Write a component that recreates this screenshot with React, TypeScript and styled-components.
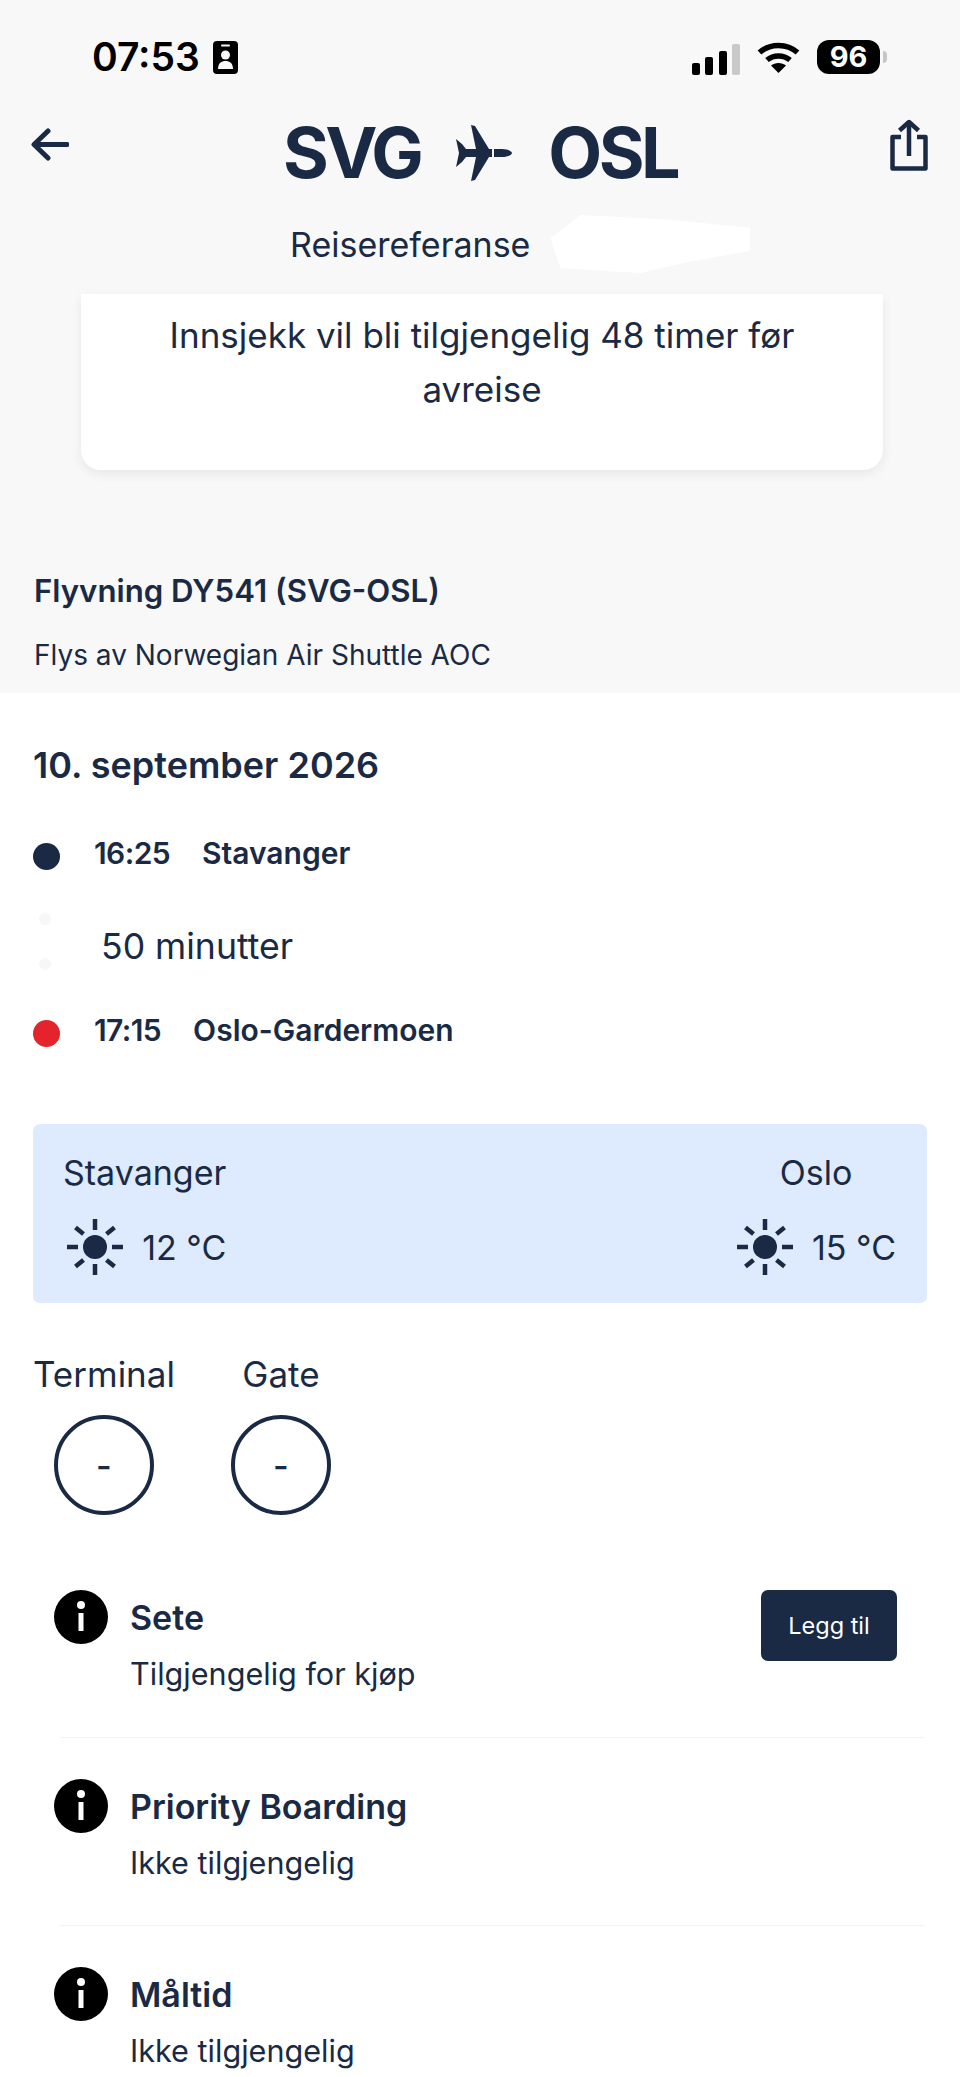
import React from 'react';
import styled, { createGlobalStyle } from 'styled-components';

const navy = '#1a2a44';

const GlobalStyle = createGlobalStyle`
  html, body {
    margin: 0;
    padding: 0;
    background: #fff;
  }
  body {
    font-family: Inter, "Noto Sans", sans-serif;
    color: ${navy};
  }
`;

const Page = styled.div`
  width: 960px;
  height: 2077px;
  overflow: hidden;
  background: #fff;
`;

const TopSection = styled.section`
  background: #f8f8f9;
  height: 693px;
  overflow: hidden;
`;

const StatusBar = styled.div`
  height: 40px;
  padding: 37px 80px 30px 92px;
  display: flex;
  align-items: center;
  justify-content: space-between;
  color: #000;
`;

const StatusLeft = styled.div`
  display: flex;
  align-items: center;
  gap: 13px;
`;

const StatusTime = styled.span`
  font-size: 39px;
  font-weight: 600;
  line-height: 40px;
`;

const StatusRight = styled.div`
  display: flex;
  align-items: center;
`;

const Battery = styled.div`
  width: 63px;
  height: 34px;
  margin-left: 17px;
  background: #000;
  border-radius: 12px;
  color: #fff;
  font-size: 29px;
  font-weight: 700;
  line-height: 34px;
  text-align: center;
  position: relative;

  &::after {
    content: '';
    position: absolute;
    right: -7px;
    top: 11px;
    width: 4px;
    height: 12px;
    border-radius: 0 6px 6px 0;
    background: #c6c6c6;
  }
`;

const HeaderRow = styled.header`
  display: grid;
  grid-template-columns: 100px 1fr 100px;
  align-items: start;
  height: 100px;
  padding: 2px 0 0;
`;

const BackButton = styled.div`
  padding: 19px 0 0 31px;
`;

const ShareButton = styled.div`
  display: flex;
  justify-content: flex-end;
  padding: 10px 32px 0 0;
`;

const Route = styled.div`
  display: flex;
  justify-content: center;
  align-items: center;
  gap: 36px;
  height: 76px;
  padding-top: 6px;
`;

const Airport = styled.span`
  font-size: 70px;
  font-weight: 700;
  letter-spacing: -3.5px;
  line-height: 76px;
`;

const ReferenceRow = styled.div`
  display: flex;
  align-items: center;
  gap: 20px;
  height: 70px;
  padding-left: 290px;
`;

const ReferenceLabel = styled.span`
  font-size: 34px;
  font-weight: 400;
`;

const Redaction = styled.span`
  display: block;
  width: 200px;
  height: 58px;
  background: #fff;
  clip-path: polygon(15% 0, 60% 8%, 100% 22%, 100% 62%, 70% 80%, 45% 100%, 5% 92%, 0 40%);
`;

const NoticeCard = styled.div`
  margin: 15px 77px 0 81px;
  height: 176px;
  padding-top: 14px;
  box-sizing: border-box;
  background: #fff;
  border-radius: 0 0 20px 20px;
  box-shadow: 0 4px 12px rgba(0, 0, 0, 0.07);
  font-size: 35px;
  line-height: 54px;
  text-align: center;
`;

const FlightInfo = styled.div`
  padding: 99px 34px 0;
`;

const FlightTitle = styled.h2`
  margin: 0;
  font-size: 31.2px;
  font-weight: 600;
  line-height: 44px;
`;

const FlightOperator = styled.p`
  margin: 22px 0 0;
  font-size: 28px;
  line-height: 40px;
`;

const Main = styled.main`
  padding: 48px 33px 0 33px;
`;

const DateTitle = styled.h1`
  margin: 0;
  font-size: 36px;
  font-weight: 600;
  line-height: 48px;
`;

const StopRow = styled.div`
  display: flex;
  align-items: center;
  height: 44px;
  font-size: 30px;
  font-weight: 600;
`;

const StopTime = styled.span`
  margin-right: 32px;
  letter-spacing: -0.6px;
`;

const StopDot = styled.i<{ $color: string }>`
  width: 27px;
  height: 27px;
  margin: 6px 34px 0 0;
  border-radius: 50%;
  background: ${(p) => p.$color};
`;

const Itinerary = styled.div`
  margin-top: 42px;
`;

const DurationRow = styled.div`
  display: flex;
  align-items: center;
  height: 90px;
  padding-left: 6px;
  gap: 50px;
  margin: 26px 0 17px;
`;

const FadedDots = styled.div`
  display: flex;
  flex-direction: column;
  gap: 33px;
  margin-top: -10px;
`;

const FadedDot = styled.i`
  display: block;
  width: 12px;
  height: 12px;
  border-radius: 50%;
  background: #f7f7f8;
`;

const DurationText = styled.span`
  font-size: 35.6px;
`;

const WeatherBox = styled.div`
  display: flex;
  justify-content: space-between;
  margin-top: 72px;
  height: 179px;
  padding: 27px 31px 0 30px;
  box-sizing: border-box;
  background: #deeafe;
  border-radius: 7px;
`;

const WeatherColumn = styled.div`
  display: flex;
  flex-direction: column;
  align-items: center;
`;

const WeatherCity = styled.span<{ $left?: boolean }>`
  font-size: 34px;
  line-height: 44px;
  align-self: ${(p) => (p.$left ? 'flex-start' : 'center')};
`;

const WeatherTemp = styled.div`
  display: flex;
  align-items: center;
  align-self: flex-end;
  gap: 18px;
  margin-top: 23px;
  font-size: 34px;
`;

const GateRow = styled.div`
  display: flex;
  gap: 56px;
  margin-top: 49px;
`;

const GateColumn = styled.div`
  display: flex;
  flex-direction: column;
  align-items: center;
`;

const GateLabel = styled.span`
  font-size: 35px;
  line-height: 44px;
`;

const GateCircle = styled.div`
  width: 100px;
  height: 100px;
  margin-top: 19px;
  box-sizing: border-box;
  border: 4px solid ${navy};
  border-radius: 50%;
  display: flex;
  align-items: center;
  justify-content: center;
  font-size: 34px;
  font-weight: 500;
`;

const Services = styled.div`
  margin-top: 75px;
`;

const ServiceRow = styled.div<{ $divider?: boolean }>`
  display: flex;
  align-items: flex-start;
  height: ${(p) => (p.$divider ? 188.6 : 113)}px;
  padding-left: 21px;
  padding-right: 30px;
  gap: 22px;
  position: relative;

  ${(p) =>
    p.$divider &&
    `&::after {
      content: '';
      position: absolute;
      left: 27px;
      right: 2px;
      bottom: 41px;
      height: 1px;
      background: #f4f4f5;
    }`}
`;

const ServiceText = styled.div`
  flex: 1;
`;

const ServiceTitle = styled.div`
  font-size: 34px;
  font-weight: 600;
  line-height: 56px;
`;

const ServiceStatus = styled.div`
  margin-top: 8px;
  font-size: 30.6px;
  line-height: 40px;
`;

const AddButton = styled.button`
  width: 136px;
  height: 71px;
  border: none;
  border-radius: 7px;
  background: ${navy};
  color: #fff;
  font-family: inherit;
  font-size: 23.5px;
`;

const SignalBar = styled.i<{ $height: number; $off?: boolean }>`
  display: block;
  width: 8px;
  height: ${(p) => p.$height}px;
  border-radius: 2px;
  background: ${(p) => (p.$off ? '#c9c9c9' : '#000')};
`;

const Signal = styled.div`
  display: flex;
  align-items: flex-end;
  gap: 5.5px;
  height: 32px;
  margin: 4px 17px 0 0;
`;

const BadgeIcon = () => (
  <svg width="25" height="33" viewBox="0 0 25 33">
    <rect width="25" height="33" rx="4" fill="#000" />
    <rect x="8" y="3.5" width="9" height="2" rx="1" fill="#f8f8f9" />
    <circle cx="12.5" cy="14" r="4.5" fill="#f8f8f9" />
    <path d="M5 28c0-6 3.5-8 7.5-8s7.5 2 7.5 8z" fill="#f8f8f9" />
  </svg>
);

const WifiIcon = () => (
  <svg width="43" height="32" viewBox="0 0 43 32" fill="none" stroke="#000" strokeWidth="5.5">
    <path d="M2.5 11.5C13 2 30 2 40.5 11.5" />
    <path d="M10 19c6.500-5.500 16.500-5.500 23 0" />
    <path d="M21.500 32 14 24.500c4-3.500 11-3.500 15 0z" fill="#000" stroke="none" />
  </svg>
);

const BackIcon = () => (
  <svg width="38" height="33" viewBox="0 0 38 33" fill="none" stroke={navy} strokeWidth="5" strokeLinecap="round" strokeLinejoin="round">
    <path d="M36 16.500H4" />
    <path d="M17 3 3 16.500 17 30" />
  </svg>
);

const ShareIcon = () => (
  <svg width="38" height="52" viewBox="0 0 38 52" fill="none" stroke={navy} strokeWidth="4.500" strokeLinejoin="round">
    <path d="M11 18H2.500v31.500h33V18H27" />
    <path d="M19 37V4" />
    <path d="M9.500 11.500 19 3l9.500 8.500" strokeWidth="4.500" />
  </svg>
);

const PlaneIcon = () => (
  <svg width="56" height="56" viewBox="0 0 56 56" fill={navy}>
    <path d="M0 14 6 19 10 24H20L15 0 19 1 33 24H36V32H33L19 55 15 56 20 32H10L6 37 0 42 3 28Z" />
    <path d="M38 24H46C51 24 56 26 56 28C56 30 51 32 46 32H38Z" />
  </svg>
);

const SunIcon = () => (
  <svg width="58" height="58" viewBox="0 0 58 58" fill={navy}>
    <circle cx="29" cy="29" r="12" />
    <g stroke={navy} strokeWidth="4.500">
      <path d="M29 1v11" />
      <path d="M29 46v11" />
      <path d="M1 29h11" />
      <path d="M46 29h11" />
      <path d="m9.500 9.500 8 6.500" />
      <path d="m48.500 9.500-8 6.500" />
      <path d="m9.500 48.500 8-6.500" />
      <path d="m48.500 48.500-8-6.500" />
    </g>
  </svg>
);

const InfoIcon = () => (
  <svg width="54" height="54" viewBox="0 0 54 54" style={{ flexShrink: 0 }}>
    <circle cx="27" cy="27" r="27" fill="#000" />
    <circle cx="27" cy="15" r="4" fill="#fff" />
    <rect x="24.500" y="23" width="5" height="18" fill="#fff" />
  </svg>
);

const services = [
  { title: 'Sete', status: 'Tilgjengelig for kjøp', action: 'Legg til' },
  { title: 'Priority Boarding', status: 'Ikke tilgjengelig' },
  { title: 'Måltid', status: 'Ikke tilgjengelig' },
];

const weather = [
  { city: 'Stavanger', temp: '12 °C', left: true },
  { city: 'Oslo', temp: '15 °C', left: false },
];

export default function App() {
  return (
    <Page>
      <GlobalStyle />
      <TopSection>
        <StatusBar>
          <StatusLeft>
            <StatusTime>07:53</StatusTime>
            <BadgeIcon />
          </StatusLeft>
          <StatusRight>
            <Signal>
              <SignalBar $height={12} />
              <SignalBar $height={18} />
              <SignalBar $height={24} />
              <SignalBar $height={31} $off />
            </Signal>
            <WifiIcon />
            <Battery>96</Battery>
          </StatusRight>
        </StatusBar>
        <HeaderRow>
          <BackButton>
            <BackIcon />
          </BackButton>
          <Route>
            <Airport>SVG</Airport>
            <PlaneIcon />
            <Airport>OSL</Airport>
          </Route>
          <ShareButton>
            <ShareIcon />
          </ShareButton>
        </HeaderRow>
        <ReferenceRow>
          <ReferenceLabel>Reisereferanse</ReferenceLabel>
          <Redaction />
        </ReferenceRow>
        <NoticeCard>
          Innsjekk vil bli tilgjengelig 48 timer før
          <br />
          avreise
        </NoticeCard>
        <FlightInfo>
          <FlightTitle>Flyvning DY541 (SVG-OSL)</FlightTitle>
          <FlightOperator>Flys av Norwegian Air Shuttle AOC</FlightOperator>
        </FlightInfo>
      </TopSection>
      <Main>
        <DateTitle>10. september 2026</DateTitle>
        <Itinerary>
          <StopRow>
            <StopDot $color={navy} />
            <StopTime>16:25</StopTime>
            <span>Stavanger</span>
          </StopRow>
          <DurationRow>
            <FadedDots>
              <FadedDot />
              <FadedDot />
            </FadedDots>
            <DurationText>50 minutter</DurationText>
          </DurationRow>
          <StopRow>
            <StopDot $color="#e5232d" />
            <StopTime>17:15</StopTime>
            <span>Oslo-Gardermoen</span>
          </StopRow>
        </Itinerary>
        <WeatherBox>
          {weather.map((w) => (
            <WeatherColumn key={w.city}>
              <WeatherCity $left={w.left}>{w.city}</WeatherCity>
              <WeatherTemp>
                <SunIcon />
                {w.temp}
              </WeatherTemp>
            </WeatherColumn>
          ))}
        </WeatherBox>
        <GateRow>
          <GateColumn>
            <GateLabel>Terminal</GateLabel>
            <GateCircle>-</GateCircle>
          </GateColumn>
          <GateColumn>
            <GateLabel>Gate</GateLabel>
            <GateCircle>-</GateCircle>
          </GateColumn>
        </GateRow>
        <Services>
          {services.map((s, i) => (
            <ServiceRow key={s.title} $divider={i < services.length - 1}>
              <InfoIcon />
              <ServiceText>
                <ServiceTitle>{s.title}</ServiceTitle>
                <ServiceStatus>{s.status}</ServiceStatus>
              </ServiceText>
              {s.action && <AddButton>{s.action}</AddButton>}
            </ServiceRow>
          ))}
        </Services>
      </Main>
    </Page>
  );
}
